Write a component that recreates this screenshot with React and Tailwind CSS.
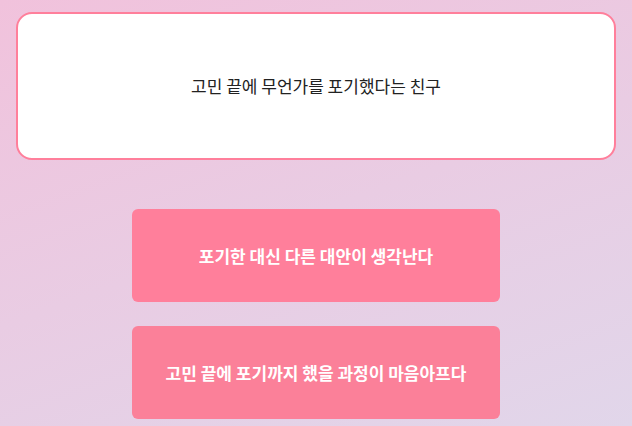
export default function App() {
  const font = { fontFamily: '"Noto Sans CJK KR", "Noto Sans", sans-serif' };
  return (
    <div
      className="w-[632px] h-[426px] overflow-hidden bg-[linear-gradient(160deg,#f1c2dc_0%,#e1d6ea_100%)] px-4 pt-3"
      style={font}
    >
      <div className="h-[148px] rounded-2xl border-2 border-[#ff7f9b] bg-white flex items-center justify-center">
        <span className="text-[17px] text-[#222222]">고민 끝에 무언가를 포기했다는 친구</span>
      </div>
      <div className="mt-[49px] flex flex-col items-center gap-[24px]">
        <button className="w-[368px] h-[93px] rounded-md bg-[#ff7f9b] text-white text-[17px] font-semibold flex items-center justify-center">
          포기한 대신 다른 대안이 생각난다
        </button>
        <button className="w-[368px] h-[93px] rounded-md bg-[#fb8099] text-white text-[17px] font-semibold flex items-center justify-center">
          고민 끝에 포기까지 했을 과정이 마음아프다
        </button>
      </div>
    </div>
  );
}
